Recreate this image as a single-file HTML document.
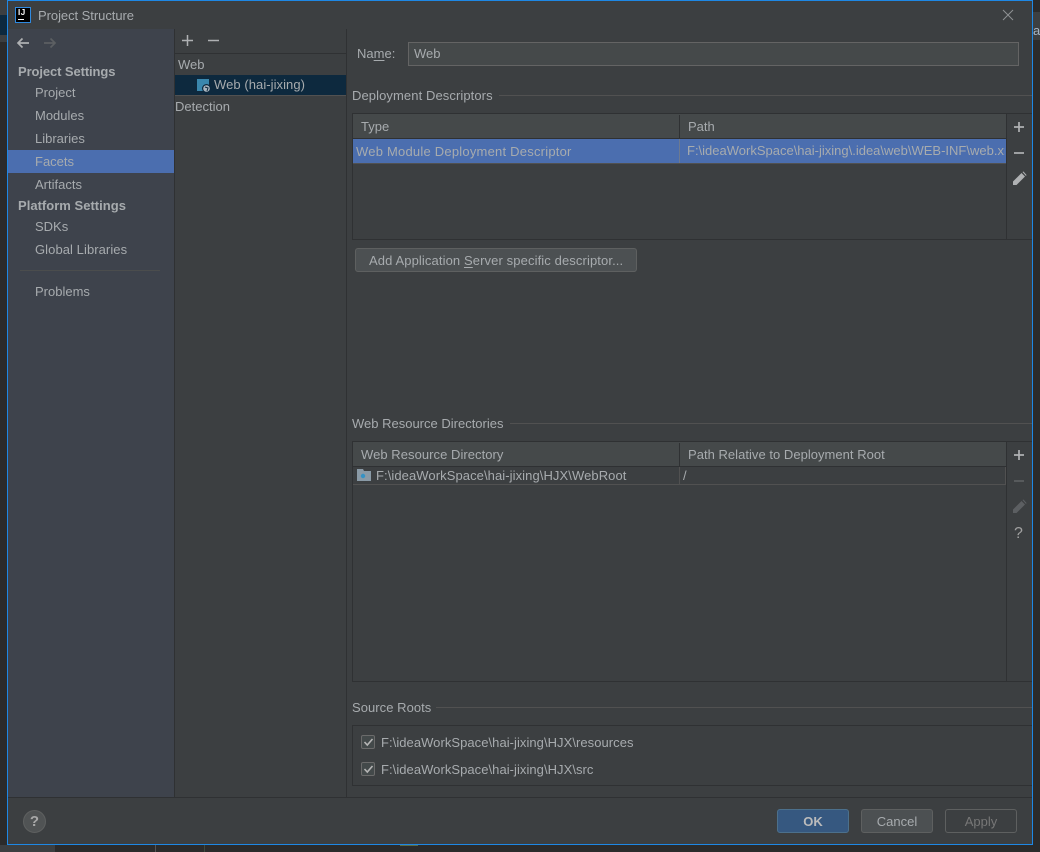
<!DOCTYPE html>
<html><head><meta charset="utf-8"><title>Project Structure</title>
<style>
html,body{margin:0;padding:0;width:1040px;height:852px;overflow:hidden;background:#2b2b2b}
body{position:relative;font-family:"Liberation Sans",sans-serif;font-size:13px;color:#a7abae}
.a{position:absolute}
.t{position:absolute;white-space:nowrap;line-height:16px;height:16px}
.l{position:absolute;background:#2f3133}
svg{position:absolute;overflow:visible}
u{text-underline-offset:2px}
</style></head><body>
<div class="a" style="left:0;top:0;width:7px;height:42px;background:#3c3f41"></div>
<div class="a" style="left:0;top:15px;width:7px;height:20px;background:#0d293e"></div>
<div class="a" style="left:0;top:845px;width:55px;height:7px;background:#3c3f41"></div>
<div class="a" style="left:155px;top:845px;width:1px;height:7px;background:#555"></div>
<div class="a" style="left:204px;top:845px;width:1px;height:7px;background:#3d4a3d"></div>
<div class="a" style="left:400px;top:845px;width:18px;height:1px;background:#5a6b45"></div>
<div class="a" style="left:1033px;top:12px;width:7px;height:28px;background:#3c3f41"></div>
<div class="t" style="left:1033px;top:23px;color:#a9b7c6">a</div>
<div class="a" style="left:8px;top:1px;width:1024px;height:843px;background:#3c3f41"></div>

<!-- title -->
<div class="a" style="left:15px;top:7px;width:16px;height:16px;background:#000;border:1px solid #2f8ae0;box-sizing:border-box"></div>
<div class="t" style="left:18px;top:8px;font:bold 8px/10px 'Liberation Sans',sans-serif;color:#fff;letter-spacing:.5px">IJ</div>
<div class="a" style="left:18px;top:19px;width:6px;height:1px;background:#fff"></div>
<div class="t" style="left:38px;top:8px;letter-spacing:-.05px">Project Structure</div>
<svg style="left:1003px;top:10px" width="10" height="10"><path d="M0 0L10 10M10 0L0 10" stroke="#8f9193" stroke-width="1" fill="none"/></svg>

<!-- sidebar -->
<div class="a" style="left:8px;top:29px;width:166px;height:768px;background:#3e434c"></div>
<div class="a" style="left:174px;top:29px;width:1px;height:768px;background:#2f3133"></div>
<svg style="left:16px;top:37px" width="14" height="12"><path d="M13 6H2M6.500 1.500L2 6l4.500 4.500" stroke="#afb1b3" stroke-width="1.700" fill="none"/></svg>
<svg style="left:43px;top:37px" width="14" height="12"><path d="M1 6h11M7.500 1.500L12 6l-4.500 4.500" stroke="#5c5f62" stroke-width="1.700" fill="none"/></svg>
<div class="t" style="left:18px;top:64px;font-weight:bold;letter-spacing:-.1px">Project Settings</div>
<div class="t" style="left:35px;top:85px">Project</div>
<div class="t" style="left:35px;top:108px">Modules</div>
<div class="t" style="left:35px;top:131px">Libraries</div>
<div class="a" style="left:8px;top:150px;width:166px;height:23px;background:#4b6eaf"></div>
<div class="t" style="left:35px;top:154px">Facets</div>
<div class="t" style="left:35px;top:177px">Artifacts</div>
<div class="t" style="left:18px;top:198px;font-weight:bold;letter-spacing:.02px">Platform Settings</div>
<div class="t" style="left:35px;top:219px">SDKs</div>
<div class="t" style="left:35px;top:242px;letter-spacing:.07px">Global Libraries</div>
<div class="a" style="left:20px;top:270px;width:140px;height:1px;background:#4b4d4d"></div>
<div class="t" style="left:35px;top:284px">Problems</div>

<!-- middle -->
<svg style="left:182px;top:35px" width="11" height="11"><path d="M5.500 0v11M0 5.500h11" stroke="#afb1b3" stroke-width="1.500" fill="none"/></svg>
<svg style="left:208px;top:35px" width="11" height="11"><path d="M0 5.500h11" stroke="#afb1b3" stroke-width="1.500" fill="none"/></svg>
<div class="l" style="left:175px;top:53px;width:171px;height:1px"></div>
<div class="t" style="left:178px;top:57px">Web</div>
<div class="a" style="left:175px;top:75px;width:171px;height:20px;background:#0d293e"></div>
<div class="l" style="left:175px;top:95px;width:171px;height:1px;background:#515151"></div>
<svg style="left:197px;top:79px" width="14" height="14"><rect width="12" height="12" fill="#3a87ad"/><circle cx="9.500" cy="9.500" r="4.500" fill="#0d293e"/><circle cx="9.500" cy="9.500" r="3.300" fill="#a9b4bd"/><path d="M8 8l3 1-1 3" stroke="#0d293e" fill="none"/></svg>
<div class="t" style="left:214px;top:77px;letter-spacing:.06px">Web (hai-jixing)</div>
<div class="t" style="left:175px;top:99px">Detection</div>
<div class="l" style="left:346px;top:29px;width:1px;height:768px"></div>

<!-- name -->
<div class="t" style="left:357px;top:46px">Na<u>m</u>e:</div>
<div class="a" style="left:408px;top:42px;width:611px;height:24px;box-sizing:border-box;background:#45494a;border:1px solid #646464"></div>
<div class="t" style="left:414px;top:46px">Web</div>

<!-- deployment descriptors -->
<div class="t" style="left:352px;top:88px;letter-spacing:.09px">Deployment Descriptors</div>
<div class="a" style="left:499px;top:95px;width:533px;height:1px;background:#515151"></div>
<div class="a" style="left:352px;top:113px;width:680px;height:127px;box-sizing:border-box;border:1px solid #2f3133;border-right:0"></div>
<div class="a" style="left:353px;top:114px;width:653px;height:24px;background:#45494a"></div>
<div class="l" style="left:353px;top:138px;width:653px;height:1px"></div>
<div class="l" style="left:679px;top:115px;width:1px;height:23px"></div>
<div class="l" style="left:1006px;top:114px;width:1px;height:125px"></div>
<div class="t" style="left:361px;top:119px">Type</div>
<div class="t" style="left:688px;top:119px">Path</div>
<div class="a" style="left:353px;top:139px;width:653px;height:24px;background:#4b6eaf"></div>
<div class="a" style="left:679px;top:139px;width:1px;height:24px;background:#6d7a90"></div>
<div class="a" style="left:353px;top:163px;width:653px;height:1px;background:#515151"></div>
<div class="t" style="left:356px;top:144px;letter-spacing:.22px">Web Module Deployment Descriptor</div>
<div class="a" style="left:687px;top:143px;width:318px;height:18px;overflow:hidden"><div class="t" style="left:0;top:0">F:\ideaWorkSpace\hai-jixing\.idea\web\WEB-INF\web.xml</div></div>
<svg style="left:1014px;top:122px" width="10" height="10"><path d="M5 0v10M0 5h10" stroke="#afb1b3" stroke-width="1.700" fill="none"/></svg>
<svg style="left:1014px;top:148px" width="10" height="10"><path d="M0 5h10" stroke="#afb1b3" stroke-width="1.700" fill="none"/></svg>
<svg style="left:1013px;top:172px" width="14" height="14"><path d="M0 13v-3.500L8.500 1l3.500 3.500L3.500 13zM9.500 0l1-.5L13.500 3l-.5 1z" fill="#afb1b3"/></svg>

<div class="a" style="left:355px;top:248px;width:282px;height:24px;box-sizing:border-box;background:#4c5052;border:1px solid #5e6060;border-radius:3px"></div>
<div class="t" style="left:369px;top:253px;letter-spacing:.11px">Add Application <u>S</u>erver specific descriptor...</div>

<!-- web resource -->
<div class="t" style="left:352px;top:416px">Web Resource Directories</div>
<div class="a" style="left:510px;top:423px;width:522px;height:1px;background:#515151"></div>
<div class="a" style="left:352px;top:441px;width:680px;height:241px;box-sizing:border-box;border:1px solid #2f3133;border-right:0"></div>
<div class="a" style="left:353px;top:442px;width:653px;height:24px;background:#45494a"></div>
<div class="l" style="left:353px;top:466px;width:653px;height:1px"></div>
<div class="l" style="left:679px;top:443px;width:1px;height:23px"></div>
<div class="a" style="left:679px;top:467px;width:1px;height:17px;background:#515151"></div>
<div class="l" style="left:1006px;top:442px;width:1px;height:240px"></div>
<div class="t" style="left:361px;top:447px;letter-spacing:.05px">Web Resource Directory</div>
<div class="t" style="left:688px;top:447px;letter-spacing:.03px">Path Relative to Deployment Root</div>
<div class="a" style="left:353px;top:484px;width:652px;height:1px;background:#515151"></div>
<div class="a" style="left:1005px;top:467px;width:1px;height:18px;background:#515151"></div>
<svg style="left:357px;top:469px" width="14" height="12"><path d="M0 0h6l1 2h7v10H0z" fill="#8a9aa6"/><circle cx="6" cy="7" r="2.200" fill="#3592c4"/></svg>
<div class="t" style="left:376px;top:468px;letter-spacing:.08px">F:\ideaWorkSpace\hai-jixing\HJX\WebRoot</div>
<div class="t" style="left:683px;top:468px">/</div>
<svg style="left:1014px;top:450px" width="10" height="10"><path d="M5 0v10M0 5h10" stroke="#afb1b3" stroke-width="1.700" fill="none"/></svg>
<svg style="left:1014px;top:476px" width="10" height="10"><path d="M0 5h10" stroke="#5c5f62" stroke-width="1.700" fill="none"/></svg>
<svg style="left:1013px;top:500px" width="14" height="14"><path d="M0 13v-3.500L8.500 1l3.500 3.500L3.500 13zM9.500 0l1-.5L13.500 3l-.5 1z" fill="#5c5f62"/></svg>
<div class="t" style="left:1014px;top:526px;font-size:16px;color:#a0a0a0">?</div>

<!-- source roots -->
<div class="t" style="left:352px;top:700px;letter-spacing:.05px">Source Roots</div>
<div class="a" style="left:436px;top:707px;width:596px;height:1px;background:#515151"></div>
<div class="a" style="left:352px;top:725px;width:680px;height:61px;box-sizing:border-box;border:1px solid #2f3133;border-right:0"></div>
<div class="a" style="left:361px;top:735px;width:14px;height:14px;box-sizing:border-box;background:#43494a;border:1px solid #6b6b6b;border-radius:2px"></div>
<svg style="left:364px;top:738px" width="9" height="8"><path d="M.5 4l2.800 3L8.500 1" stroke="#b5b5b5" stroke-width="1.600" fill="none"/></svg>
<div class="t" style="left:381px;top:735px;letter-spacing:.05px">F:\ideaWorkSpace\hai-jixing\HJX\resources</div>
<div class="a" style="left:361px;top:762px;width:14px;height:14px;box-sizing:border-box;background:#43494a;border:1px solid #6b6b6b;border-radius:2px"></div>
<svg style="left:364px;top:765px" width="9" height="8"><path d="M.5 4l2.800 3L8.500 1" stroke="#b5b5b5" stroke-width="1.600" fill="none"/></svg>
<div class="t" style="left:381px;top:762px;letter-spacing:.05px">F:\ideaWorkSpace\hai-jixing\HJX\src</div>

<!-- footer -->
<div class="l" style="left:8px;top:797px;width:1024px;height:1px"></div>
<div class="a" style="left:23px;top:810px;width:23px;height:23px;box-sizing:border-box;border-radius:50%;background:#505354;border:1px solid #5e6060"></div>
<div class="t" style="left:23px;top:814px;width:23px;text-align:center;font-weight:bold;font-size:15px;color:#a8a8a8">?</div>
<div class="a" style="left:777px;top:809px;width:72px;height:24px;box-sizing:border-box;background:#365880;border:1px solid #4c708c;border-radius:3px"></div>
<div class="t" style="left:777px;top:814px;width:72px;text-align:center;font-weight:bold;color:#bbb">OK</div>
<div class="a" style="left:861px;top:809px;width:72px;height:24px;box-sizing:border-box;background:#4c5052;border:1px solid #5e6060;border-radius:3px"></div>
<div class="t" style="left:861px;top:814px;width:72px;text-align:center">Cancel</div>
<div class="a" style="left:945px;top:809px;width:72px;height:24px;box-sizing:border-box;border:1px solid #5e6060;border-radius:3px"></div>
<div class="t" style="left:945px;top:814px;width:72px;text-align:center;color:#777">Apply</div>

<!-- window border -->
<div class="a" style="left:7px;top:0;width:1026px;height:1px;background:#1e88e5"></div>
<div class="a" style="left:7px;top:844px;width:1026px;height:1px;background:#1e88e5"></div>
<div class="a" style="left:7px;top:0;width:1px;height:845px;background:#1e88e5"></div>
<div class="a" style="left:1032px;top:0;width:1px;height:845px;background:#1e88e5"></div>
</body></html>
